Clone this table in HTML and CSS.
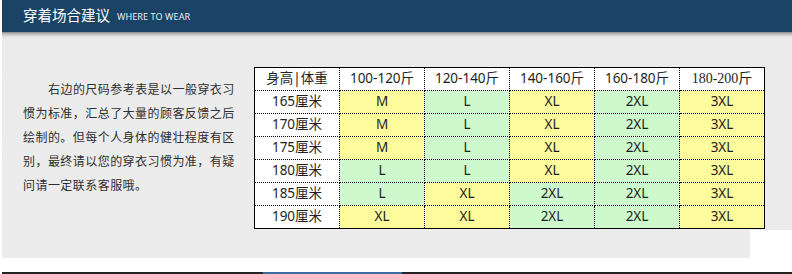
FILE: index.html
```html
<!DOCTYPE html>
<html lang="zh">
<head>
<meta charset="utf-8">
<link rel="stylesheet" href="styles.css">
</head>
<body>
<div class="page">
  <header class="banner">
    <span class="banner-title">穿着场合建议</span>
    <span class="banner-sub">WHERE TO WEAR</span>
  </header>
  <main class="main">
    <p class="intro">右边的尺码参考表是以一般穿衣习惯为标准，汇总了大量的顾客反馈之后绘制的。但每个人身体的健壮程度有区别，最终请以您的穿衣习惯为准，有疑问请一定联系客服哦。</p>
    <table class="size-table">
      <colgroup>
        <col class="c1"><col class="c2"><col class="c3"><col class="c4"><col class="c5"><col class="c6">
      </colgroup>
      <tr class="head">
        <td>身高|体重</td><td>100-120斤</td><td>120-140斤</td><td>140-160斤</td><td>160-180斤</td><td class="alt">180-200斤</td>
      </tr>
      <tr><td>165厘米</td><td class="y">M</td><td class="g">L</td><td class="y">XL</td><td class="g">2XL</td><td class="y">3XL</td></tr>
      <tr><td>170厘米</td><td class="y">M</td><td class="g">L</td><td class="y">XL</td><td class="g">2XL</td><td class="y">3XL</td></tr>
      <tr><td>175厘米</td><td class="y">M</td><td class="g">L</td><td class="y">XL</td><td class="g">2XL</td><td class="y">3XL</td></tr>
      <tr><td>180厘米</td><td class="g">L</td><td class="g">L</td><td class="y">XL</td><td class="g">2XL</td><td class="y">3XL</td></tr>
      <tr><td>185厘米</td><td class="g">L</td><td class="y">XL</td><td class="g">2XL</td><td class="g">2XL</td><td class="y">3XL</td></tr>
      <tr><td>190厘米</td><td class="y">XL</td><td class="y">XL</td><td class="g">2XL</td><td class="g">2XL</td><td class="y">3XL</td></tr>
    </table>
  </main>
  <div class="main-foot"></div>
  <div class="bottom-bar"><span class="bottom-tab"></span></div>
</div>
</body>
</html>
```

FILE: styles.css
```css
html, body {
  margin: 0;
  padding: 0;
  background: #ffffff;
}
.page {
  width: 792px;
  height: 274px;
  padding-left: 2px;
  box-sizing: border-box;
  overflow: hidden;
  font-family: "Noto Sans", "Noto Sans CJK SC", sans-serif;
}
.banner {
  height: 32px;
  background: #1a4366;
  display: flex;
  align-items: center;
  padding-left: 21px;
  gap: 7px;
  color: #ffffff;
}
.banner-title {
  font-family: "Noto Sans CJK SC", sans-serif;
  font-size: 14.5px;
  line-height: 1;
  margin-top: -1px;
}
.banner-sub {
  font-size: 9px;
  letter-spacing: 0.1px;
  line-height: 1;
  color: #e6edf3;
}
.main {
  height: 198px;
  margin: 0;
  background: linear-gradient(to bottom, #8a8a8a 0px, #bdbdbd 2px, #dcdcdc 4px, #ebebeb 6px, #ececec 100%);
  display: flex;
  align-items: flex-start;
}
.intro {
  width: 216px;
  margin: 45px 0 0 21px;
  font-family: "Noto Sans CJK SC", sans-serif;
  font-size: 12px;
  line-height: 24px;
  letter-spacing: 0.45px;
  text-indent: 25px;
  color: #2e2e2e;
}
.size-table {
  margin: 35px 0 0 15px;
  border-collapse: collapse;
  border: 1px solid #000000;
  background: #ffffff;
  table-layout: fixed;
  width: 510px;
  font-size: 13.5px;
  color: #1f1f1f;
}
.size-table col { width: 85px; }
.size-table td {
  height: 22px;
  padding: 0;
  text-align: center;
  vertical-align: middle;
  border: 1px dotted #000000;
  line-height: 1;
  white-space: nowrap;
  overflow: hidden;
}
.size-table tr:first-child td { border-top: 1px solid #000; }
.size-table tr td:first-child { border-left: 1px solid #000; }
.size-table tr td:last-child { border-right: 1px solid #000; }
.size-table tr:last-child td { border-bottom: 1px solid #000; }
.size-table .head td.alt {
  font-family: "Liberation Serif", "Noto Sans CJK SC", serif;
  font-size: 14px;
}
.size-table td.y { background: #fdfb9c; }
.size-table td.g { background: #cdf9cd; }
.main-foot {
  width: 748px;
  height: 28px;
  background: #ececec;
}
.bottom-bar {
  margin-top: 14px;
  height: 2px;
  background: #232323;
  display: flex;
  padding-left: 261px;
}
.bottom-tab {
  width: 139px;
  height: 2px;
  background: #3b6da3;
}
```
